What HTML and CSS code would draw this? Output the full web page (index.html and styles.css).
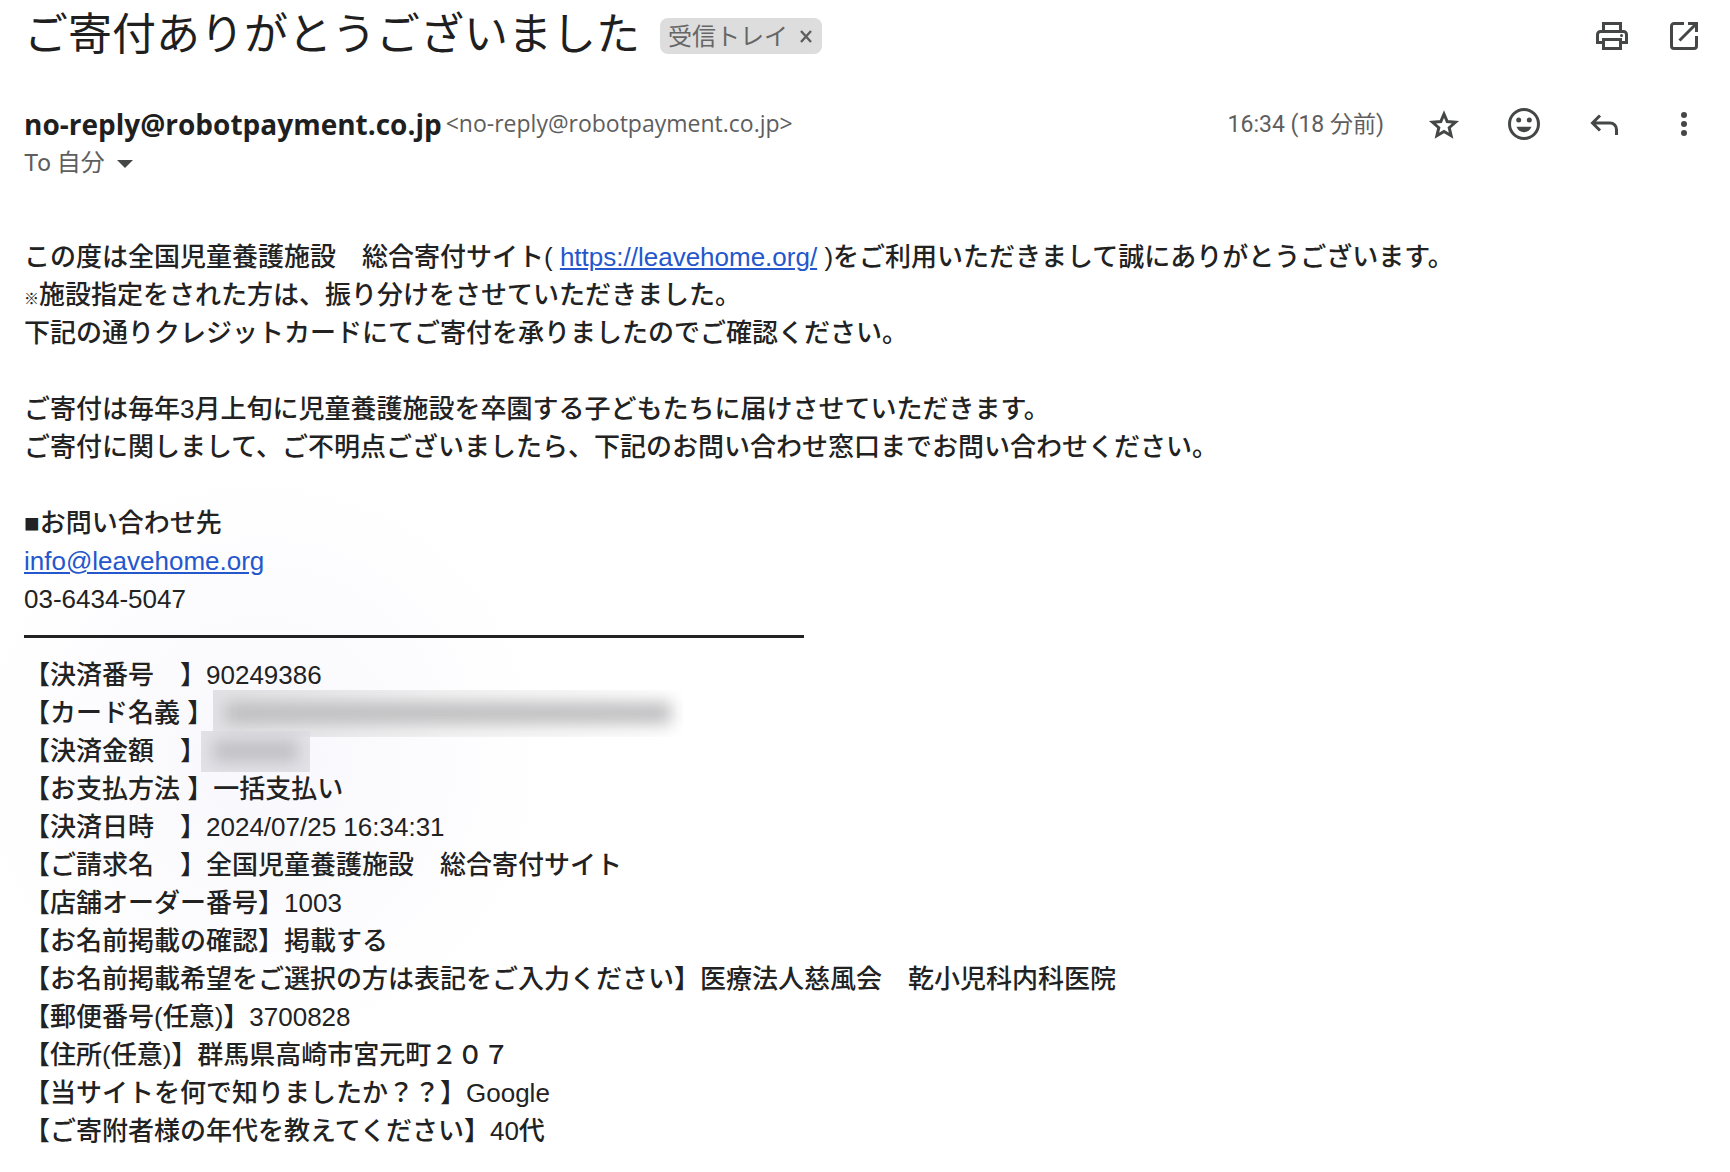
FILE: index.html
```html
<!DOCTYPE html>
<html lang="ja">
<head>
    <meta charset="UTF-8">
    <meta name="viewport" content="width=device-width, initial-scale=1.0">
    <title>ご寄付ありがとうございました</title>
    <link rel="stylesheet" href="styles.css">
</head>
<body>
    <header class="subject">
        <h1>ご寄付ありがとうございました</h1>
        <div class="label">
            <span>受信トレイ</span>
            <button type="button" class="label-remove" aria-label="ラベルを削除">
                <svg width="12" height="14" viewBox="0 0 12 14"><path d="M1 2l10 11M11 2L1 13" stroke="#5e5e5e" stroke-width="2.4"/></svg>
            </button>
        </div>
        <div class="actions">
            <button type="button" class="icon" aria-label="印刷">
                <svg width="32" height="28" viewBox="0 0 32 28" fill="none" stroke="#444746" stroke-width="3">
                    <path d="M7.5 9V1.5h17V9M7.5 20.5h-6V12.5a3 3 0 0 1 3-3h23a3 3 0 0 1 3 3v8h-6"/>
                    <path d="M7.5 17.5h17v9h-17z"/>
                    <circle cx="25.5" cy="13.5" r="1.5" fill="#444746" stroke="none"/>
                </svg>
            </button>
            <button type="button" class="icon" aria-label="新しいウィンドウで開く">
                <svg width="28" height="28" viewBox="0 0 28 28" fill="none" stroke="#444746" stroke-width="3">
                    <path d="M14 1.5H4A2.5 2.5 0 0 0 1.5 4v20A2.5 2.5 0 0 0 4 26.5h20a2.5 2.5 0 0 0 2.5-2.5V14"/>
                    <path d="M18 1.5h8.5V10M26 2L9.5 18.5"/>
                </svg>
            </button>
        </div>
    </header>

    <div class="sender">
        <div class="from">
            <strong>no-reply@robotpayment.co.jp</strong>
            <span class="address">&lt;no-reply@robotpayment.co.jp&gt;</span>
        </div>
        <div class="actions">
            <time class="date">16:34 (18 分前)</time>
            <button type="button" class="icon" aria-label="スター">
                <svg width="32" height="32" viewBox="0 0 32 32" fill="none" stroke="#444746" stroke-width="3">
                    <path d="M16 6l3.200 7.600 8.200.7-6.200 5.400 1.900 8-7.100-4.300-7.100 4.300 1.900-8-6.200-5.400 8.200-.7z"/>
                </svg>
            </button>
            <button type="button" class="icon" aria-label="リアクションを追加">
                <svg width="32" height="32" viewBox="0 0 32 32" fill="#444746">
                    <circle cx="16" cy="16" r="14.5" fill="none" stroke="#444746" stroke-width="3"/>
                    <circle cx="10.7" cy="12" r="2.5"/>
                    <circle cx="21.3" cy="12" r="2.5"/>
                    <path d="M8.5 18.8h15c-1.2 3.400-4 5.400-7.500 5.400s-6.300-2-7.500-5.400z"/>
                </svg>
            </button>
            <button type="button" class="icon" aria-label="返信">
                <svg width="32" height="32" viewBox="0 0 32 32" fill="none" stroke="#444746" stroke-width="3">
                    <path d="M12 7.5L4.5 15l7.5 7.500M4.500 15H22a6.500 6.500 0 0 1 6.500 6.500V27"/>
                </svg>
            </button>
            <button type="button" class="icon" aria-label="その他">
                <svg width="32" height="32" viewBox="0 0 32 32" fill="#444746">
                    <circle cx="16" cy="7" r="3"/>
                    <circle cx="16" cy="16" r="3"/>
                    <circle cx="16" cy="25" r="3"/>
                </svg>
            </button>
        </div>
    </div>
    <button type="button" class="recipient">To 自分 <span class="caret"></span></button>

    <main class="message">
        <p>この度は全国児童養護施設　総合寄付サイト( <a href="https://leavehome.org/">https://leavehome.org/</a> )をご利用いただきまして誠にありがとうございます。<br>
        <span class="mark">※</span>施設指定をされた方は、振り分けをさせていただきました。<br>
        下記の通りクレジットカードにてご寄付を承りましたのでご確認ください。</p>

        <p>ご寄付は毎年3月上旬に児童養護施設を卒園する子どもたちに届けさせていただきます。<br>
        ご寄付に関しまして、ご不明点ございましたら、下記のお問い合わせ窓口までお問い合わせください。</p>

        <div class="contact">
            ■お問い合わせ先<br>
            <a href="mailto:info@leavehome.org">info@leavehome.org</a><br>
            03-6434-5047
        </div>
        <hr>
        <ul class="details">
            <li>【決済番号　】90249386</li>
            <li>【カード名義 】<span class="mask name"><i></i></span></li>
            <li>【決済金額　】<span class="mask amount"><i></i></span></li>
            <li>【お支払方法 】一括支払い</li>
            <li>【決済日時　】2024/07/25 16:34:31</li>
            <li>【ご請求名　】全国児童養護施設　総合寄付サイト</li>
            <li>【店舗オーダー番号】1003</li>
            <li>【お名前掲載の確認】掲載する</li>
            <li>【お名前掲載希望をご選択の方は表記をご入力ください】医療法人慈風会　乾小児科内科医院</li>
            <li>【郵便番号(任意)】3700828</li>
            <li>【住所(任意)】群馬県高崎市宮元町２０７</li>
            <li>【当サイトを何で知りましたか？？】Google</li>
            <li>【ご寄附者様の年代を教えてください】40代</li>
        </ul>
    </main>
</body>
</html>
```
FILE: styles.css
```css
body{
    margin: 0;
    padding: 0 24px 22px;
    background: #fff radial-gradient(circle at 260px 760px, #f8f8fd 0, #fff 290px) no-repeat;
    color: #222;
    font-family: "Liberation Sans", "Noto Sans CJK JP", sans-serif;
}

button{
    padding: 0;
    border: none;
    background: none;
    color: inherit;
    font: inherit;
    cursor: pointer;
}

svg{
    display: block;
}

.subject{
    display: flex;
    align-items: center;
    height: 72px;
}

h1{
    margin: 0 20px 2px 0;
    color: #1f1f1f;
    font-size: 44px;
    font-weight: 400;
    line-height: 66px;
}

.label{
    display: flex;
    align-items: center;
    gap: 12px;
    height: 36px;
    padding: 0 10px 0 8px;
    border-radius: 8px;
    background: #ddd;
    color: #666;
    font-size: 24px;
}

.label span{
    margin-bottom: 4px;
}

.actions{
    display: flex;
    align-items: center;
    gap: 40px;
    margin-left: auto;
}

.icon{
    display: flex;
    align-items: center;
    justify-content: center;
    width: 40px;
    height: 40px;
}

.subject .actions{
    gap: 32px;
    margin-right: 2px;
}

.sender{
    display: flex;
    align-items: center;
    height: 40px;
    margin-top: 32px;
}

.sender .actions{
    margin-right: 2px;
}

.from{
    display: flex;
    align-items: center;
    gap: 4px;
    font-family: "Open Sans", "Noto Sans CJK JP", sans-serif;
    line-height: 38px;
}

.from strong{
    color: #1f1f1f;
    font-size: 28px;
}

.address{
    padding-bottom: 2px;
    color: #5e5e5e;
    font-size: 23px;
}

.date{
    padding-bottom: 4px;
    color: #5e5e5e;
    font-family: Roboto, "Noto Sans CJK JP", sans-serif;
    font-size: 23px;
}

.recipient{
    display: flex;
    align-items: center;
    height: 38px;
    gap: 12px;
    color: #5e5e5e;
    font-family: Roboto, "Noto Sans CJK JP", sans-serif;
    font-size: 24px;
    line-height: 36px;
}

.caret{
    margin-top: 2px;
    border: 8px solid transparent;
    border-top-color: #444746;
    border-bottom: none;
}

.message{
    margin-top: 56px;
    font-size: 26px;
    font-weight: 500;
    line-height: 38px;
}

.message p{
    margin: 0 0 38px;
}

.message a{
    color: #2457cc;
}

.mark{
    font-size: 15px;
    line-height: 15px;
}

hr{
    width: 780px;
    height: 3px;
    margin: 17px auto 18px 0;
    border: none;
    background: #222;
}

.details{
    margin: 0;
    padding: 0;
    list-style: none;
}

.details li{
    display: flex;
    align-items: center;
    height: 38px;
    white-space: pre;
}

/* hidden values */
.mask{
    display: flex;
    align-items: center;
    overflow: hidden;
}

.mask i{
    flex: 1;
    height: 22px;
    margin: 0 12px;
    background: #bebec0;
    filter: blur(8px);
}

.name{
    width: 470px;
    height: 47px;
    background: linear-gradient(90deg, #e2e2e6, #f4f4f4 50%, #fff);
}

.amount{
    width: 109px;
    height: 41px;
    margin-left: -5px;
    background: #e2e2e7;
}

.amount i{
    background: #c0c0c4;
}
```
